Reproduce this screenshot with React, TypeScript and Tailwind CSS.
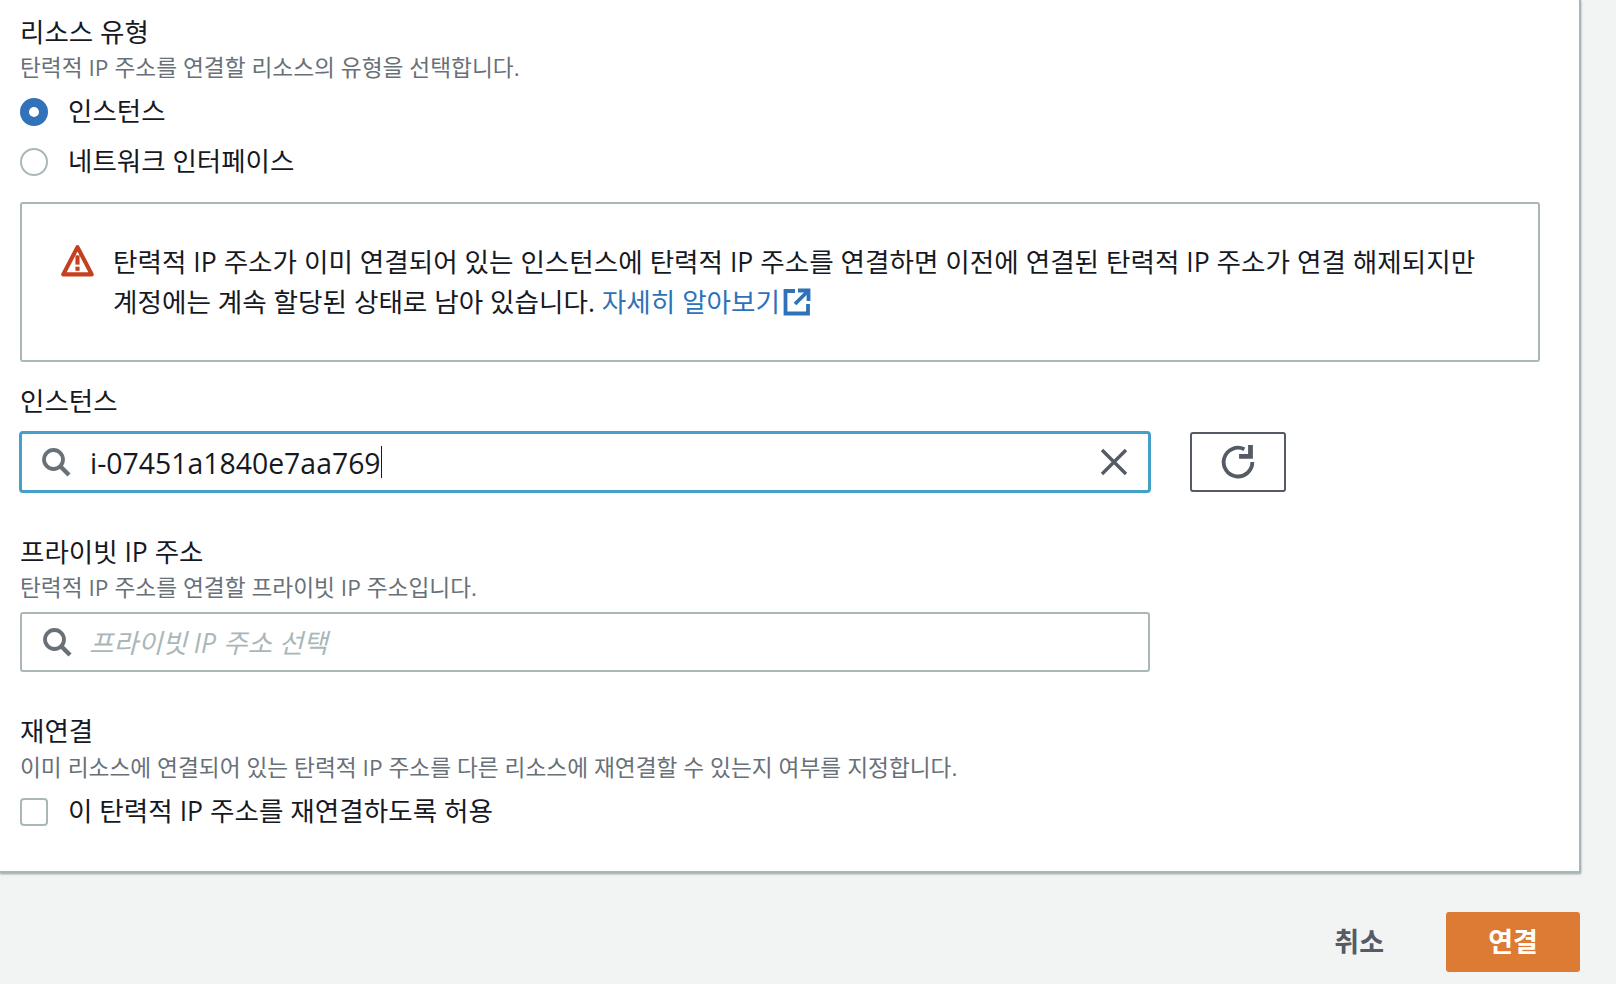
import React from "react";

const font = { fontFamily: '"Open Sans", "Noto Sans CJK KR", sans-serif' };

function SearchIcon() {
  return (
    <svg viewBox="0 0 30 30" className="w-[30px] h-[30px] shrink-0" fill="none" stroke="#687078" strokeWidth="3.8">
      <circle cx="12.5" cy="12.5" r="9.5" />
      <path d="M19.5 19.5L28 28" strokeWidth="4.4" />
    </svg>
  );
}

function Field({ title, desc, descClass }: { title: string; desc?: string; descClass?: string }) {
  return (
    <div>
      <div className="text-[26.5px] leading-[32px] text-[#16191f]">{title}</div>
      {desc && <div className={`text-[22.7px] leading-[36px] text-[#687078] ${descClass ?? "mt-[2px] -mb-[2px]"}`}>{desc}</div>}
    </div>
  );
}

export default function App() {
  return (
    <div style={font} className="w-[1616px] h-[984px] bg-[#f2f3f3] overflow-hidden">
      <div className="w-[1581px] h-[873px] bg-white border-r-2 border-b-2 border-[#aab7b8] pl-[20px] pt-[16px] shadow-[0_1px_2px_rgba(0,28,36,0.4)]">
        <Field title="리소스 유형" desc="탄력적 IP 주소를 연결할 리소스의 유형을 선택합니다." />

        <div className="mt-[3px] flex items-center gap-[20px] h-[50px]">
          <span className="w-[28px] h-[28px] rounded-full border-[9px] border-[#3172b9] bg-white" />
          <span className="text-[26.5px] text-[#16191f]">인스턴스</span>
        </div>
        <div className="flex items-center gap-[20px] h-[50px]">
          <span className="w-[28px] h-[28px] rounded-full border-[2.5px] border-[#aab7b8] bg-white" />
          <span className="text-[26.5px] text-[#16191f]">네트워크 인터페이스</span>
        </div>

        <div className="mt-[15px] w-[1520px] h-[160px] border-2 border-[#aab7b8] rounded-[3px] flex items-start pl-[39px] pt-[38px] gap-[19px]">
          <svg viewBox="0 0 32 32" className="w-[33px] h-[33px] shrink-0 mt-[2px]">
            <path d="M16 3L2.2 29.5H29.8Z" fill="none" stroke="#c4401f" strokeWidth="4" strokeLinejoin="round" />
            <rect x="14" y="11" width="4" height="9" fill="#c4401f" />
            <rect x="14" y="22" width="4" height="4" fill="#c4401f" />
          </svg>
          <p className="text-[26.6px] leading-[40px] text-[#16191f] w-[1376px]">
            탄력적 IP 주소가 이미 연결되어 있는 인스턴스에 탄력적 IP 주소를 연결하면 이전에 연결된 탄력적 IP 주소가 연결 해제되지만 계정에는 계속 할당된 상태로 남아 있습니다.{" "}
            <span className="text-[#2f72b8]">
              자세히 알아보기
              <svg viewBox="0 0 28 28" className="inline-block w-[28px] h-[28px] ml-[3px] align-[-4px]" fill="none" stroke="#2f72b8" strokeWidth="3.8">
                <path d="M12 3H2.5V25.5H25V16" />
                <path d="M15 2.5H25.5V13" />
                <path d="M25 3L12 16" />
              </svg>
            </span>
          </p>
        </div>

        <div className="mt-[23px]">
          <Field title="인스턴스" />
        </div>
        <div className="mt-[14px] flex items-center">
          <div className="-ml-[1px] w-[1132px] h-[62px] border-[3px] border-[#44a0c8] rounded-[4px] flex items-center pl-[19px] pr-[20px] gap-[19px]">
            <SearchIcon />
            <div className="flex-1 flex items-center text-[28.4px] text-[#16191f]">
              <span className="pt-[3px]">i-07451a1840e7aa769</span>
              <span className="w-[1px] h-[32px] bg-[#16191f]" />
            </div>
            <svg viewBox="0 0 28 28" className="w-[28px] h-[28px]" fill="none" stroke="#545b64" strokeWidth="3.4">
              <path d="M2 2L26 26M26 2L2 26" />
            </svg>
          </div>
          <button className="ml-[39px] w-[96px] h-[60px] border-2 border-[#545b64] rounded-[3px] flex items-center justify-center">
            <svg viewBox="0 0 32 32" className="w-[34px] h-[34px]" fill="none" stroke="#545b64" strokeWidth="3.6">
              <path d="M29.5 16A13.5 13.5 0 1 1 22 4" />
              <path d="M30 0V13H17V8.5H25.5V0Z" fill="#545b64" stroke="none" />
            </svg>
          </button>
        </div>

        <div className="mt-[43px]">
          <Field title="프라이빗 IP 주소" desc="탄력적 IP 주소를 연결할 프라이빗 IP 주소입니다." />
        </div>
        <div className="mt-[8px] w-[1130px] h-[60px] border-2 border-[#aab7b8] rounded-[3px] flex items-center pl-[20px] gap-[17px]">
          <SearchIcon />
          <span className="text-[26.6px] italic text-[#aab7b8] pt-[4px]">프라이빗 IP 주소 선택</span>
        </div>

        <div className="mt-[43px]">
          <Field title="재연결" descClass="mt-[3px] -mb-[2px]" desc="이미 리소스에 연결되어 있는 탄력적 IP 주소를 다른 리소스에 재연결할 수 있는지 여부를 지정합니다." />
        </div>
        <div className="mt-[10px] flex items-center gap-[20px] h-[36px]">
          <span className="w-[28px] h-[28px] rounded-[4px] border-[2.5px] border-[#aab7b8] bg-white" />
          <span className="text-[26.6px] text-[#16191f]">이 탄력적 IP 주소를 재연결하도록 허용</span>
        </div>
      </div>

      <div className="w-[1580px] flex justify-end items-center mt-[39px] gap-[62px]">
        <button className="text-[27px] font-bold text-[#545b64]">취소</button>
        <button className="w-[134px] h-[60px] rounded-[3px] bg-[#dd7a33] text-[27px] font-bold text-white">연결</button>
      </div>
    </div>
  );
}
